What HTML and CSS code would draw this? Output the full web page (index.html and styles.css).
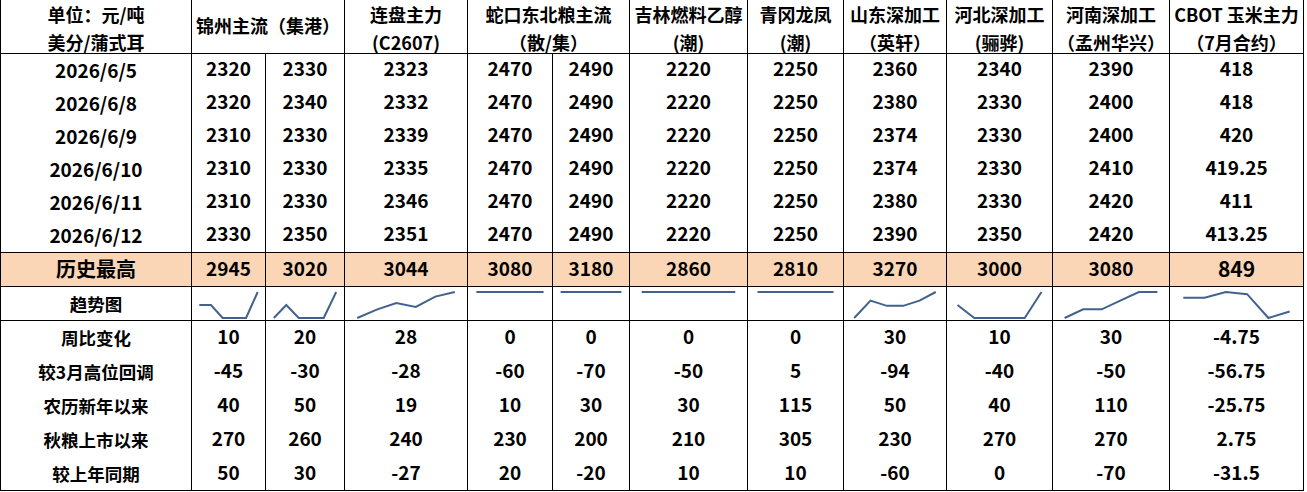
FILE: index.html
```html
<!DOCTYPE html>
<html lang="zh-CN">
<head>
<meta charset="utf-8">
<title>玉米价格</title>
<link rel="stylesheet" href="styles.css">
</head>
<body>
<table class="grid">
  <colgroup>
    <col class="w-label"><col class="w-74"><col class="w-79"><col class="w-123"><col class="w-85"><col class="w-77"><col class="w-118"><col class="w-96"><col class="w-103"><col class="w-106"><col class="w-117"><col class="w-134">
  </colgroup>
  <thead>
    <tr class="head">
      <th><div class="hcell"><span class="ln">单位：元/吨</span><span class="ln">美分/蒲式耳</span></div></th>
      <th colspan="2"><div class="hcell single">锦州主流（集港）</div></th>
      <th><div class="hcell"><span class="ln">连盘主力</span><span class="ln">(C2607)</span></div></th>
      <th colspan="2"><div class="hcell"><span class="ln">蛇口东北粮主流</span><span class="ln">（散/集）</span></div></th>
      <th><div class="hcell"><span class="ln">吉林燃料乙醇</span><span class="ln">(潮)</span></div></th>
      <th><div class="hcell"><span class="ln">青冈龙凤</span><span class="ln">(潮)</span></div></th>
      <th><div class="hcell"><span class="ln">山东深加工</span><span class="ln">（英轩）</span></div></th>
      <th><div class="hcell"><span class="ln">河北深加工</span><span class="ln">(骊骅)</span></div></th>
      <th><div class="hcell"><span class="ln">河南深加工</span><span class="ln">（孟州华兴）</span></div></th>
      <th><div class="hcell"><span class="ln">CBOT 玉米主力</span><span class="ln">（7月合约）</span></div></th>
    </tr>
  </thead>
  <tbody>
    <tr class="row"><td>2026/6/5</td><td>2320</td><td>2330</td><td>2323</td><td>2470</td><td>2490</td><td>2220</td><td>2250</td><td>2360</td><td>2340</td><td>2390</td><td>418</td></tr>
    <tr class="row"><td>2026/6/8</td><td>2320</td><td>2340</td><td>2332</td><td>2470</td><td>2490</td><td>2220</td><td>2250</td><td>2380</td><td>2330</td><td>2400</td><td>418</td></tr>
    <tr class="row"><td>2026/6/9</td><td>2310</td><td>2330</td><td>2339</td><td>2470</td><td>2490</td><td>2220</td><td>2250</td><td>2374</td><td>2330</td><td>2400</td><td>420</td></tr>
    <tr class="row"><td>2026/6/10</td><td>2310</td><td>2330</td><td>2335</td><td>2470</td><td>2490</td><td>2220</td><td>2250</td><td>2374</td><td>2330</td><td>2410</td><td>419.25</td></tr>
    <tr class="row"><td>2026/6/11</td><td>2310</td><td>2330</td><td>2346</td><td>2470</td><td>2490</td><td>2220</td><td>2250</td><td>2380</td><td>2330</td><td>2420</td><td>411</td></tr>
    <tr class="row"><td>2026/6/12</td><td>2330</td><td>2350</td><td>2351</td><td>2470</td><td>2490</td><td>2220</td><td>2250</td><td>2390</td><td>2350</td><td>2420</td><td>413.25</td></tr>
    <tr class="peak"><td class="peak-label">历史最高</td><td>2945</td><td>3020</td><td>3044</td><td>3080</td><td>3180</td><td>2860</td><td>2810</td><td>3270</td><td>3000</td><td>3080</td><td class="peak-big">849</td></tr>
    <tr class="trend">
      <td class="cn">趋势图</td>
      <td><svg class="spark" viewBox="0 0 100 33" preserveAspectRatio="none"><polyline points="10,18 26,18 42,31 58,31 74,31 90,5"/></svg></td>
      <td><svg class="spark" viewBox="0 0 100 33" preserveAspectRatio="none"><polyline points="10,31 26,18 42,31 58,31 74,31 90,5"/></svg></td>
      <td><svg class="spark" viewBox="0 0 100 33" preserveAspectRatio="none"><polyline points="10,31 26,22.64 42,16.14 58,19.86 74,9.64 90,5"/></svg></td>
      <td><svg class="spark" viewBox="0 0 100 33" preserveAspectRatio="none"><polyline points="10,5 26,5 42,5 58,5 74,5 90,5"/></svg></td>
      <td><svg class="spark" viewBox="0 0 100 33" preserveAspectRatio="none"><polyline points="10,5 26,5 42,5 58,5 74,5 90,5"/></svg></td>
      <td><svg class="spark" viewBox="0 0 100 33" preserveAspectRatio="none"><polyline points="10,5 26,5 42,5 58,5 74,5 90,5"/></svg></td>
      <td><svg class="spark" viewBox="0 0 100 33" preserveAspectRatio="none"><polyline points="10,5 26,5 42,5 58,5 74,5 90,5"/></svg></td>
      <td><svg class="spark" viewBox="0 0 100 33" preserveAspectRatio="none"><polyline points="10,31 26,13.67 42,18.87 58,18.87 74,13.67 90,5"/></svg></td>
      <td><svg class="spark" viewBox="0 0 100 33" preserveAspectRatio="none"><polyline points="10,18 26,31 42,31 58,31 74,31 90,5"/></svg></td>
      <td><svg class="spark" viewBox="0 0 100 33" preserveAspectRatio="none"><polyline points="10,31 26,22.33 42,22.33 58,13.67 74,5 90,5"/></svg></td>
      <td><svg class="spark" viewBox="0 0 100 33" preserveAspectRatio="none"><polyline points="10,10.78 26,10.78 42,5 58,7.17 74,31 90,24.5"/></svg></td>
    </tr>
    <tr class="row low"><td class="cn">周比变化</td><td>10</td><td>20</td><td>28</td><td>0</td><td>0</td><td>0</td><td>0</td><td>30</td><td>10</td><td>30</td><td>-4.75</td></tr>
    <tr class="row low"><td class="cn">较3月高位回调</td><td>-45</td><td>-30</td><td>-28</td><td>-60</td><td>-70</td><td>-50</td><td>5</td><td>-94</td><td>-40</td><td>-50</td><td>-56.75</td></tr>
    <tr class="row low"><td class="cn">农历新年以来</td><td>40</td><td>50</td><td>19</td><td>10</td><td>30</td><td>30</td><td>115</td><td>50</td><td>40</td><td>110</td><td>-25.75</td></tr>
    <tr class="row low"><td class="cn">秋粮上市以来</td><td>270</td><td>260</td><td>240</td><td>230</td><td>200</td><td>210</td><td>305</td><td>230</td><td>270</td><td>270</td><td>2.75</td></tr>
    <tr class="row low row-end"><td class="cn">较上年同期</td><td>50</td><td>30</td><td>-27</td><td>20</td><td>-20</td><td>10</td><td>10</td><td>-60</td><td>0</td><td>-70</td><td>-31.5</td></tr>
  </tbody>
</table>
</body>
</html>
```
FILE: styles.css
```css
html, body {
  margin: 0;
  padding: 0;
  background: #ffffff;
}

.grid {
  border-collapse: separate;
  border-spacing: 0;
  table-layout: fixed;
  width: 1304px;
  font-family: "Noto Sans CJK SC", "Noto Sans", sans-serif;
  font-weight: 700;
  color: #000000;
}

.w-label { width: 192px; }
.w-74 { width: 74px; }
.w-79 { width: 79px; }
.w-123 { width: 123px; }
.w-85 { width: 85px; }
.w-77 { width: 77px; }
.w-118 { width: 118px; }
.w-96 { width: 96px; }
.w-103 { width: 103px; }
.w-106 { width: 106px; }
.w-117 { width: 117px; }
.w-134 { width: 134px; }

.grid th,
.grid td {
  box-sizing: border-box;
  border-right: 1px solid #000000;
  padding: 0;
  text-align: center;
  vertical-align: middle;
  white-space: nowrap;
  overflow: hidden;
}

.grid th:first-child,
.grid td:first-child {
  border-left: 1px solid #000000;
}

.head th {
  height: 54px;
  font-size: 18px;
  font-weight: 700;
  vertical-align: top;
  border-bottom: 1px solid #000000;
}

.hcell {
  box-sizing: border-box;
  height: 53px;
  line-height: 28px;
  overflow: visible;
}

.hcell.single {
  display: flex;
  align-items: center;
  justify-content: center;
  padding-bottom: 4px;
}

.ln {
  display: block;
}

.row td {
  height: 33px;
  font-size: 19px;
  line-height: 22px;
  padding-bottom: 5px;
}

.row td:first-child {
  padding-bottom: 1px;
}

.row .cn {
  font-size: 17.5px;
}

.low td {
  height: 34px;
  padding-bottom: 4px;
}

.low td:first-child {
  padding-bottom: 0;
}

.peak td {
  height: 35px;
  background: #fad6b6;
  font-size: 19px;
  line-height: 24px;
  border-top: 1px solid #000000;
  border-bottom: 1px solid #000000;
  padding-bottom: 4px;
}

.peak .peak-label {
  font-size: 20px;
  padding-bottom: 2px;
}

.peak .peak-big {
  font-size: 21px;
}

.trend td {
  height: 34px;
  font-size: 17.5px;
  line-height: 22px;
  border-bottom: 1px solid #000000;
}

.spark {
  display: block;
  width: 100%;
  height: 33px;
}

.spark polyline {
  fill: none;
  stroke: #42628d;
  stroke-width: 2;
  stroke-linejoin: miter;
  vector-effect: non-scaling-stroke;
}

.low.row-end td {
  height: 34px;
  border-bottom: 1px solid #000000;
}
```
